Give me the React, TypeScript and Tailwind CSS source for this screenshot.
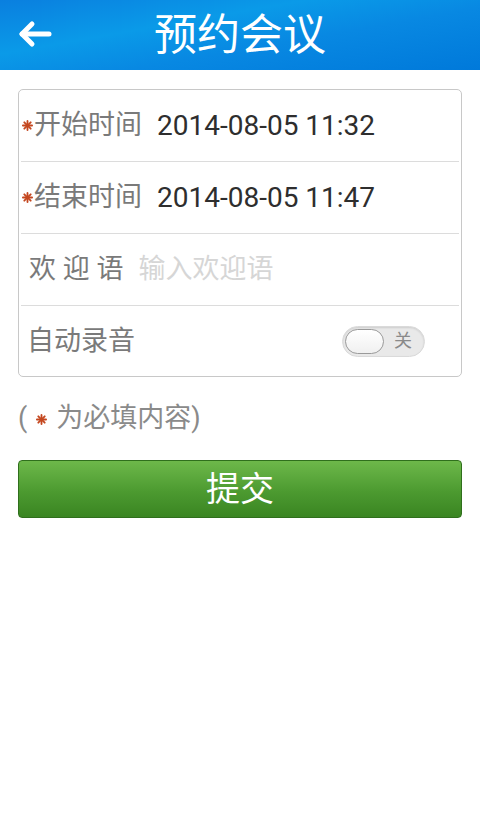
import React from 'react';

const cjk = "font-['Roboto','Noto_Sans_CJK_SC',sans-serif]";

function Star() {
  return (
    <svg width="11" height="11" viewBox="0 0 12 12" className="shrink-0">
      <g stroke="#c4471f" strokeWidth="2" strokeLinecap="round">
        <line x1="6" y1="1" x2="6" y2="11" />
        <line x1="1" y1="6" x2="11" y2="6" />
        <line x1="2.5" y1="2.5" x2="9.5" y2="9.5" />
        <line x1="9.5" y1="2.5" x2="2.5" y2="9.5" />
      </g>
    </svg>
  );
}

function BackArrow() {
  return (
    <svg width="34" height="28" viewBox="0 0 34 28">
      <g stroke="#fff" strokeWidth="5" strokeLinecap="round" strokeLinejoin="round" fill="none">
        <line x1="4" y1="14" x2="31" y2="14" />
        <polyline points="14,4 4,14 14,24" />
      </g>
    </svg>
  );
}

function Row({ children, last }: { children: React.ReactNode; last?: boolean }) {
  return (
    <div className={`mx-[2px] flex items-center ${last ? 'h-[70px]' : 'h-[72px] border-b border-[#dcdcdc]'}`}>
      {children}
    </div>
  );
}

export default function App() {
  return (
    <div className={`min-h-[815px] bg-white ${cjk}`}>
      {/* Header */}
      <header className="relative flex h-[70px] items-center justify-center bg-[linear-gradient(170deg,#0a7fdf_0%,#0a9ae8_35%,#0888e2_60%,#0079da_100%)]">
        <div className="absolute left-[18px] top-[20px]">
          <BackArrow />
        </div>
        <h1 className="text-[43px] leading-none text-white">预约会议</h1>
      </header>

      <main className="px-[18px] pt-[19px]">
        <div className="rounded-[5px] border border-[#c8c8c8] bg-white">
          <Row>
            <div className="ml-[1px] flex items-center text-[27px] text-[#7a7a7a]">
              <Star />
              <span className="ml-px">开始时间</span>
            </div>
            <span className="ml-[15px] text-[28px] text-[#2e2e2e]">2014-08-05 11:32</span>
          </Row>
          <Row>
            <div className="ml-[1px] flex items-center text-[27px] text-[#7a7a7a]">
              <Star />
              <span className="ml-px">结束时间</span>
            </div>
            <span className="ml-[15px] text-[28px] text-[#2e2e2e]">2014-08-05 11:47</span>
          </Row>
          <Row>
            <span className="ml-[8px] text-[27px] text-[#7a7a7a]">欢 迎 语</span>
            <span className="ml-[15px] text-[27px] text-[#d6d6d6]">输入欢迎语</span>
          </Row>
          <Row last>
            <span className="ml-[6px] text-[27px] text-[#7a7a7a]">自动录音</span>
            <div className="ml-auto mr-[34px] flex h-[31px] w-[83px] items-center rounded-full border border-[#dadada] bg-[#e9e9e9] shadow-[inset_0_1px_2px_rgba(0,0,0,0.12)]">
              <div className="ml-[2px] h-[25px] w-[39px] rounded-full border border-[#9a9a9a] bg-[linear-gradient(#ffffff,#f0f0f0)]" />
              <span className="ml-[10px] text-[18px] leading-none text-[#8a8a8a]">关</span>
            </div>
          </Row>
        </div>

        <p className="mt-[28px] flex items-center text-[27px] leading-none text-[#8a8a8a]">
          <span>(</span>
          <span className="mx-[9px] mt-[2px]">
            <Star />
          </span>
          <span>为必填内容)</span>
        </p>

        <button className="mt-[28px] flex h-[58px] w-full items-center justify-center rounded-[4px] border border-[#2f6f1c] bg-[linear-gradient(#6db84a,#4c9a30_55%,#3a8522)] text-[34px] text-white">
          提交
        </button>
      </main>
    </div>
  );
}
